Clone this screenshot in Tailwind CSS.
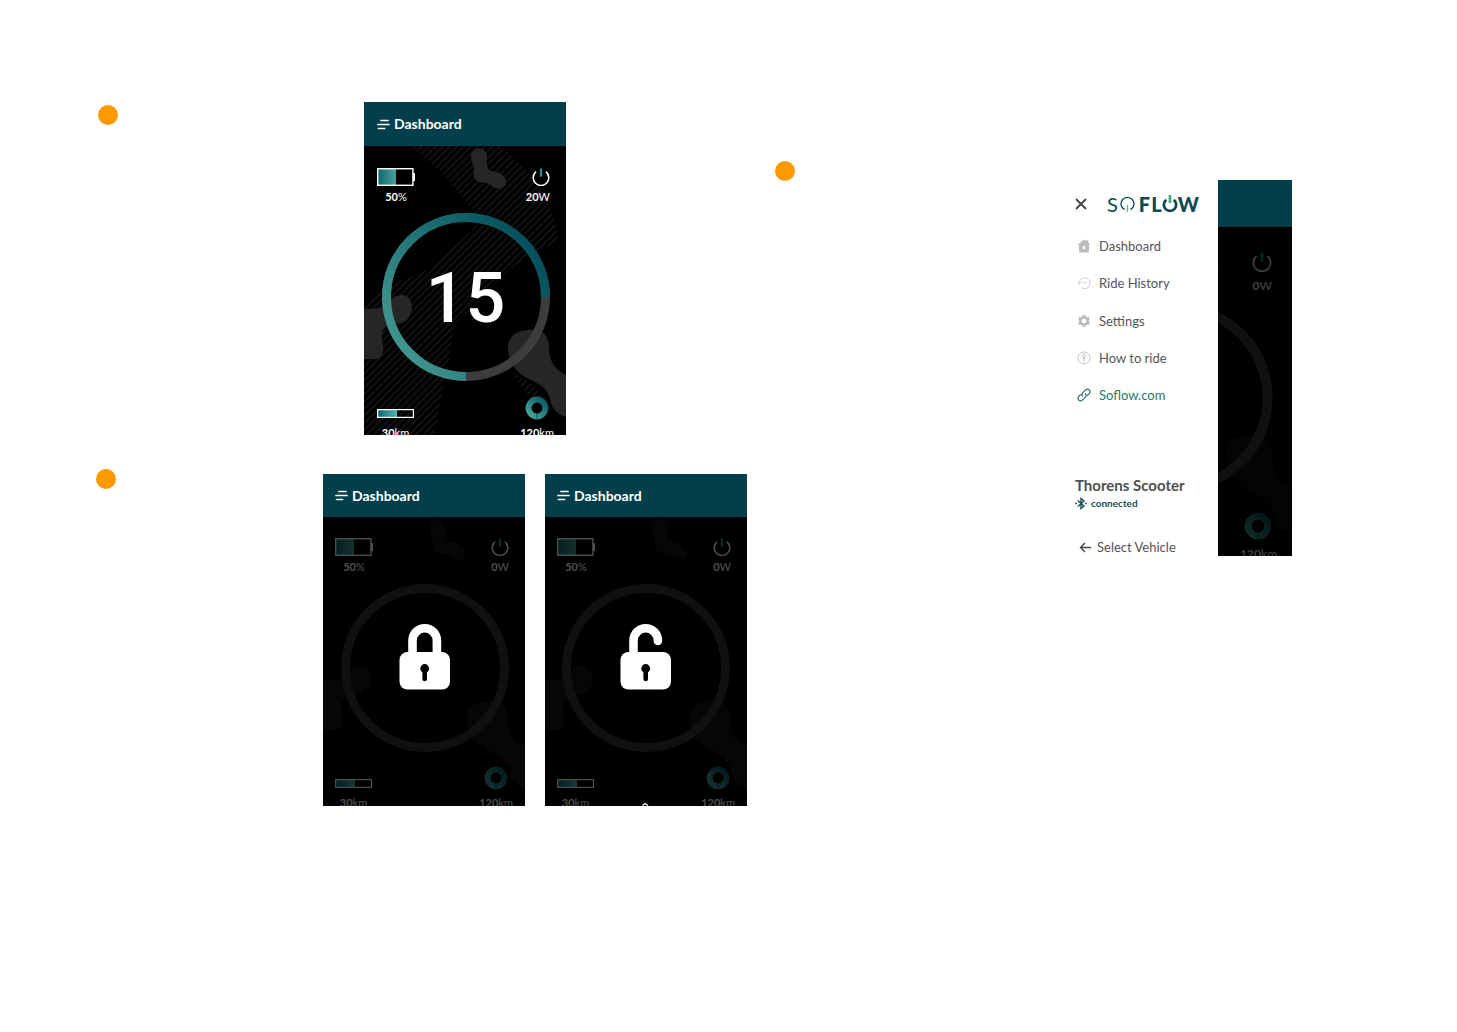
<!DOCTYPE html>
<html lang="en">
<head>
<meta charset="utf-8">
<meta name="viewport" content="width=device-width, initial-scale=1">
<title>SoFlow app screens</title>
<script src="https://cdn.jsdelivr.net/npm/@tailwindcss/browser@4"></script>
</head>
<body class="bg-white font-['Lato',sans-serif]">

<!-- Shared artwork -->
<svg class="absolute size-0" aria-hidden="true">
  <defs>
    <linearGradient id="arc" x1="0" y1="1" x2="1" y2="0.3"><stop offset="0.1" stop-color="#43998f"/><stop offset="0.55" stop-color="#1f7376"/><stop offset="1" stop-color="#04505c"/></linearGradient>
    <linearGradient id="level"><stop offset="0" stop-color="#10686f"/><stop offset="1" stop-color="#46a097"/></linearGradient>
    <linearGradient id="level2"><stop offset="0" stop-color="#0f6972"/><stop offset="1" stop-color="#4db3ac"/></linearGradient>
    <linearGradient id="donutfill" x1="0" y1="1" x2="1" y2="0"><stop offset="0" stop-color="#4aa89c"/><stop offset="1" stop-color="#0b5762"/></linearGradient>
    <pattern id="stripes" width="5" height="5" patternUnits="userSpaceOnUse" patternTransform="rotate(45)"><path d="M1 0V5" stroke="#222" stroke-width="1"/></pattern>
    <symbol id="hatch" viewBox="0 0 202 289">
      <path fill="url(#stripes)" d="M45 0H135C165 20 195 60 193 95L150 120L90 180L85 215L70 289H0V160C20 130 60 135 80 110C95 95 110 85 115 75C100 50 75 20 45 0ZM148 226L165 236L180 250L186 262L168 256Z"/>
    </symbol>
    <symbol id="blobs" viewBox="0 0 202 289">
      <path fill="#262626" d="M107 10C107 0 123 0 123 11C123 18 122 23 127 25C135 25 142 30 142 36C142 43 134 45 128 40C124 37 121 36 116 36C110 35 109 30 110 24C110 19 107 16 107 10Z"/>
      <path fill="#262626" d="M0 163L18 162C24 161 26 150 37 149C45 149 48 155 48 162C47 172 41 177 33 178C24 179 19 181 18 187C17 194 20 198 19 205C18 211 15 214 9 213H0ZM144 204C143 196 147 190 152 187C158 184 170 182 178 186C183 189 185 195 185 202C185 212 188 222 202 229V271C192 268 187 261 186 253C184 242 173 237 163 232C153 227 145 217 144 204Z"/>
    </symbol>
    <symbol id="battery" viewBox="0 0 38 18">
      <rect x="1" y="1" width="18" height="16" fill="url(#level)"/>
      <rect x=".7" y=".7" width="35.2" height="16.6" fill="none" stroke="#fff" stroke-width="1.4"/>
      <path d="M36 5h2v8h-2z" fill="#fff"/>
    </symbol>
    <symbol id="power" viewBox="0 0 18 18">
      <path fill="none" stroke="#fff" stroke-width="1.5" d="M4.1 3.6A7.8 7.8 0 1 0 13.9 3.6"/>
      <path stroke="#2f8d88" stroke-width="2.4" d="M9 .5V8.6"/>
    </symbol>
    <symbol id="bar" viewBox="0 0 37 9">
      <rect x="1" y="1" width="19" height="7" fill="url(#level2)"/>
      <rect x=".6" y=".6" width="35.8" height="7.8" fill="none" stroke="#fff" stroke-width="1.2"/>
    </symbol>
    <symbol id="donut" viewBox="0 0 24 24">
      <circle cx="12" cy="12" r="8.4" fill="none" stroke="url(#donutfill)" stroke-width="6"/>
      <path d="M12 17v6.6" stroke="#0b4a52" stroke-width="1"/>
    </symbol>
    <symbol id="menu" viewBox="0 0 14 11"><path stroke="#fff" stroke-width="1.7" stroke-linecap="round" d="M5 1.5h7M2 5.500h11M2.500 9.500h6"/></symbol>
    <symbol id="lockbody" viewBox="0 0 202 289">
      <rect x="76.500" y="135" width="50.500" height="37.500" rx="8" fill="#fff"/>
      <circle cx="101.700" cy="151.500" r="4.400" fill="#000"/>
      <path d="M101.700 152V162" stroke="#000" stroke-width="4.600" stroke-linecap="round"/>
    </symbol>
  </defs>
</svg>

<main class="flex min-h-screen flex-wrap items-start lg:flex-nowrap">
  <div class="flex w-[747px] shrink-0 flex-col gap-[39px] pt-[102px]">

    <!-- Ride view -->
    <section class="flex justify-between pr-[181px] pl-[98px]">
      <span class="mt-[3px] size-5 rounded-full bg-[#ff9900]"></span>
      <article class="w-[202px] overflow-hidden bg-black text-white">
        <header class="flex h-11 items-center bg-[#033f4a] px-3">
          <button class="flex items-center gap-1 text-sm leading-5 font-bold"><svg class="h-[11px] w-[14px]" aria-hidden="true"><use href="#menu"/></svg>Dashboard</button>
        </header>
        <div class="relative h-[289px] overflow-hidden">
          <svg class="absolute inset-0 size-full" viewBox="0 0 202 289" aria-hidden="true">
            <use href="#hatch"/><use href="#blobs"/>
            <circle cx="102" cy="151" r="79.500" fill="none" stroke="#3d3d3d" stroke-width="9"/>
            <path d="M102 230.500A79.500 79.500 0 1 1 181.500 151" fill="none" stroke="url(#arc)" stroke-width="9"/>
          </svg>
          <div class="relative flex flex-col pt-[22px] pr-3 pl-[13px] text-[11px] leading-[14px]">
            <div class="flex justify-between">
              <div class="flex flex-col items-center gap-1"><svg class="h-[18px] w-[38px]" aria-hidden="true"><use href="#battery"/></svg><p><b>50</b><span>%</span></p></div>
              <div class="flex flex-col items-end gap-1 pr-1"><svg class="size-[18px]" aria-hidden="true"><use href="#power"/></svg><p><b>20</b><span>W</span></p></div>
            </div>
            <p class="flex h-48 items-center justify-center pb-1 font-['Roboto',sans-serif] text-[70px] leading-none font-medium">15</p>
            <div class="flex items-end justify-between">
              <div class="flex flex-col items-center gap-2"><svg class="h-[9px] w-[37px]" aria-hidden="true"><use href="#bar"/></svg><p><b>30</b><span>km</span></p></div>
              <div class="flex flex-col items-center gap-[6px]"><svg class="size-6" aria-hidden="true"><use href="#donut"/></svg><p><b>120</b><span>km</span></p></div>
            </div>
          </div>
        </div>
      </article>
    </section>

    <!-- Locked and unlocked views -->
    <section class="flex justify-between pl-24">
      <span class="mt-[-5px] size-5 rounded-full bg-[#ff9900]"></span>
      <div class="flex gap-5">
        <article class="w-[202px] overflow-hidden bg-black text-white">
          <header class="flex h-[43px] items-center bg-[#033f4a] px-[11px]">
            <button class="flex items-center gap-1 text-sm leading-5 font-bold"><svg class="h-[11px] w-[14px]" aria-hidden="true"><use href="#menu"/></svg>Dashboard</button>
          </header>
          <div class="relative h-[289px] overflow-hidden">
            <svg class="absolute inset-0 size-full" viewBox="0 0 202 289" aria-hidden="true">
              <use href="#blobs" opacity=".18"/>
              <circle cx="102" cy="151" r="79.500" fill="none" stroke="#101010" stroke-width="9"/>
            </svg>
            <div class="relative flex flex-col px-3 pt-[21px] text-[11px] leading-[14px] opacity-30">
              <div class="flex justify-between">
                <div class="flex flex-col items-center gap-1"><svg class="h-[18px] w-[38px]" aria-hidden="true"><use href="#battery"/></svg><p><b>50</b><span>%</span></p></div>
                <div class="flex flex-col items-end gap-1 pr-1"><svg class="size-[18px]" aria-hidden="true"><use href="#power"/></svg><p><b>0</b><span>W</span></p></div>
              </div>
              <div class="flex items-end justify-between pt-48">
                <div class="flex flex-col items-center gap-2"><svg class="h-[9px] w-[37px]" aria-hidden="true"><use href="#bar"/></svg><p><b>30</b><span>km</span></p></div>
                <div class="flex flex-col items-center gap-[6px]"><svg class="size-6" aria-hidden="true"><use href="#donut"/></svg><p><b>120</b><span>km</span></p></div>
              </div>
            </div>
            <svg class="absolute inset-0 size-full" viewBox="0 0 202 289" role="img" aria-label="Locked">
              <path d="M89.500 138V123.500A12.200 12.200 0 0 1 113.900 123.500V138" fill="none" stroke="#fff" stroke-width="8.600"/>
              <use href="#lockbody"/>
            </svg>
          </div>
        </article>

        <article class="w-[202px] overflow-hidden bg-black text-white">
          <header class="flex h-[43px] items-center bg-[#033f4a] px-[11px]">
            <button class="flex items-center gap-1 text-sm leading-5 font-bold"><svg class="h-[11px] w-[14px]" aria-hidden="true"><use href="#menu"/></svg>Dashboard</button>
          </header>
          <div class="relative h-[289px] overflow-hidden">
            <svg class="absolute inset-0 size-full" viewBox="0 0 202 289" aria-hidden="true">
              <use href="#blobs" opacity=".18"/>
              <circle cx="101" cy="151" r="79.500" fill="none" stroke="#101010" stroke-width="9"/>
            </svg>
            <div class="relative flex flex-col px-3 pt-[21px] text-[11px] leading-[14px] opacity-30">
              <div class="flex justify-between">
                <div class="flex flex-col items-center gap-1"><svg class="h-[18px] w-[38px]" aria-hidden="true"><use href="#battery"/></svg><p><b>50</b><span>%</span></p></div>
                <div class="flex flex-col items-end gap-1 pr-1"><svg class="size-[18px]" aria-hidden="true"><use href="#power"/></svg><p><b>0</b><span>W</span></p></div>
              </div>
              <div class="flex items-end justify-between pt-48">
                <div class="flex flex-col items-center gap-2"><svg class="h-[9px] w-[37px]" aria-hidden="true"><use href="#bar"/></svg><p><b>30</b><span>km</span></p></div>
                <div class="flex flex-col items-center gap-[6px]"><svg class="size-6" aria-hidden="true"><use href="#donut"/></svg><p><b>120</b><span>km</span></p></div>
              </div>
            </div>
            <svg class="absolute inset-0 size-full" viewBox="1 0 202 289" role="img" aria-label="Unlocked">
              <path d="M89.500 138V123.500A12.200 12.200 0 0 1 113.900 123.500" fill="none" stroke="#fff" stroke-width="8.600"/>
              <circle cx="113.900" cy="124" r="4.300" fill="#fff"/>
              <use href="#lockbody"/>
              <path d="M98.500 288.500L101.200 286.500L104 288.500" fill="none" stroke="#fff" stroke-width="1.400"/>
            </svg>
          </div>
        </article>
      </div>
    </section>
  </div>

  <!-- Side menu view -->
  <section class="flex flex-1 justify-between pt-[161px] pr-[165px] pl-7">
    <span class="size-5 shrink-0 rounded-full bg-[#ff9900]"></span>
    <article class="mt-[19px] flex h-[376px] shrink-0 overflow-hidden">
      <div class="flex w-[144px] flex-col pl-px text-[#555]">
        <div class="flex h-[47px] items-center gap-5">
          <button aria-label="Close menu"><svg class="size-3" viewBox="0 0 12 12" fill="none" stroke="#444" stroke-width="1.800" aria-hidden="true"><path d="M1 1L11 11M11 1L1 11"/></svg></button>
          <div class="flex items-center text-xl leading-6 text-[#0b4a50]" aria-label="SoFlow">
            <span>S</span>
            <svg class="mr-1 ml-[2px] h-4 w-[15px]" viewBox="0 0 15 16" fill="none" aria-hidden="true"><path d="M4.500 13.600A6.500 6.500 0 1 1 10.500 13.600" stroke="#0b4a50" stroke-width="1.300"/><path d="M7.500 9V16" stroke="#6fae9f" stroke-width="1.300"/></svg>
            <span class="font-black">F</span>
            <span class="ml-px font-black">L</span>
            <svg class="h-[18px] w-4" viewBox="0 0 16 18" fill="none" aria-hidden="true"><path d="M4.300 4.800A6.200 6.200 0 1 0 11.700 4.800" stroke="#0b4a50" stroke-width="2.700"/><path d="M8 0V8" stroke="#4ba58c" stroke-width="2.800"/></svg>
            <span class="font-black">W</span>
          </div>
        </div>
        <nav class="flex flex-col pl-[2px] text-[13px] leading-[18px]">
          <a href="#dashboard" class="flex h-[37px] items-center gap-2"><svg class="size-[14px]" viewBox="0 0 14 14" aria-hidden="true"><path fill="#bdbdbd" d="M7 .5L9.500 2V1.200H11.300V3.500L13 5.500L12 6.300V13.500H2V6.300L1 5.500Z"/><path fill="#fff" d="M5.800 7h2.400v3H5.800z"/></svg>Dashboard</a>
          <a href="#history" class="flex h-[38px] items-center gap-2"><svg class="size-[14px]" viewBox="0 0 14 14" fill="none" stroke="#cfcfcf" aria-hidden="true"><path d="M2.200 8A5.400 5.400 0 1 1 4.500 11.700M.5 6L2.200 8.300L4.300 6.500M5.500 5.500L7.500 8L10 5.500"/></svg>Ride History</a>
          <a href="#settings" class="flex h-[37px] items-center gap-2"><svg class="size-[14px]" viewBox="0 0 14 14" fill="none" stroke="#bababa" aria-hidden="true"><circle cx="7" cy="7" r="3.700" stroke-width="2.600"/><path stroke-width="2.600" d="M7 .9V2.500M7 11.500V13.100M1.700 4L3.100 4.800M10.900 9.200L12.300 10M1.700 10L3.100 9.200M10.900 4.800L12.300 4"/></svg>Settings</a>
          <a href="#how-to-ride" class="flex h-[37px] items-center gap-2"><svg class="size-[14px]" viewBox="0 0 14 14" fill="none" stroke="#c4c4c4" aria-hidden="true"><circle cx="7" cy="7" r="6"/><circle cx="7" cy="4.700" r="1.600"/><path d="M7 6.300V11.200M5.600 7.500H8.400"/></svg>How to ride</a>
          <a href="#soflow" class="flex h-[37px] items-center gap-2 text-[#23796d]"><svg class="size-[14px]" viewBox="0 0 14 14" fill="none" stroke="#23695f" stroke-width="1.100" stroke-linecap="round" aria-hidden="true"><path d="M5.500 8.300A2.700 2.700 0 0 1 5.600 4.800L8.800 1.600A2.700 2.700 0 0 1 12.500 5.400L10.500 7.400M8.500 5.700A2.700 2.700 0 0 1 8.400 9.200L5.200 12.400A2.700 2.700 0 0 1 1.500 8.600L3.500 6.600"/></svg>Soflow.com</a>
        </nav>
        <div class="mt-auto flex flex-col">
          <h2 class="text-[15px] leading-5 font-bold text-[#505050]">Thorens Scooter</h2>
          <p class="flex h-4 items-center gap-1 text-[10px] leading-4 font-bold text-[#174f50]"><svg class="h-[13px] w-3" viewBox="0 0 12 13" fill="none" stroke="#174f50" stroke-width="1.400" aria-hidden="true"><path d="M2.800 3.500L9 9L6 11.500V1.500L9 4L2.800 9.500"/><path d="M.3 6.500H2M10 6.500H11.700"/></svg>connected</p>
          <a href="#vehicles" class="mt-7 flex h-[17px] items-center gap-[6px] pl-1 text-[13px] leading-[17px]"><svg class="h-[11px] w-3" viewBox="0 0 12 11" fill="none" stroke="#444" stroke-width="1.400" aria-hidden="true"><path d="M12 5.500H1.500M6 1L1.500 5.500L6 10"/></svg>Select Vehicle</a>
        </div>
      </div>
      <div class="w-[74px] bg-black text-white">
        <div class="h-[47px] bg-[#033f4a]"></div>
        <div class="relative h-[329px] overflow-hidden">
          <svg class="absolute inset-0 size-full" viewBox="137.600 0 65.500 291" aria-hidden="true">
            <svg width="202" height="289" opacity=".1"><use href="#blobs"/></svg>
            <circle cx="102" cy="151" r="79.500" fill="none" stroke="#101010" stroke-width="9"/>
          </svg>
          <div class="relative flex flex-col items-end pt-[25px] text-xs leading-4 opacity-25">
            <svg class="mr-5 size-5" aria-hidden="true"><use href="#power"/></svg>
            <p class="mt-[6px] mr-5"><b>0</b><span>W</span></p>
            <svg class="mt-[218px] mr-5 size-7" aria-hidden="true"><use href="#donut"/></svg>
            <p class="mt-[6px] mr-[15px]"><b>120</b><span>km</span></p>
          </div>
        </div>
      </div>
    </article>
  </section>
</main>
</body>
</html>
